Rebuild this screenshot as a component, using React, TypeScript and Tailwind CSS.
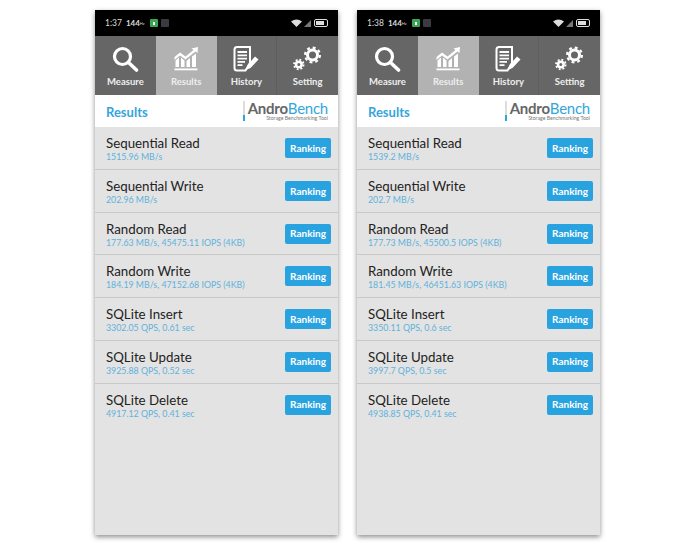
import React from "react";

interface Row {
  title: string;
  value: string;
}

interface Phone {
  time: string;
  rows: Row[];
}

const phones: Phone[] = [
  {
    time: "1:37",
    rows: [
      { title: "Sequential Read", value: "1515.96 MB/s" },
      { title: "Sequential Write", value: "202.96 MB/s" },
      { title: "Random Read", value: "177.63 MB/s, 45475.11 IOPS (4KB)" },
      { title: "Random Write", value: "184.19 MB/s, 47152.68 IOPS (4KB)" },
      { title: "SQLite Insert", value: "3302.05 QPS, 0.61 sec" },
      { title: "SQLite Update", value: "3925.88 QPS, 0.52 sec" },
      { title: "SQLite Delete", value: "4917.12 QPS, 0.41 sec" },
    ],
  },
  {
    time: "1:38",
    rows: [
      { title: "Sequential Read", value: "1539.2 MB/s" },
      { title: "Sequential Write", value: "202.7 MB/s" },
      { title: "Random Read", value: "177.73 MB/s, 45500.5 IOPS (4KB)" },
      { title: "Random Write", value: "181.45 MB/s, 46451.63 IOPS (4KB)" },
      { title: "SQLite Insert", value: "3350.11 QPS, 0.6 sec" },
      { title: "SQLite Update", value: "3997.7 QPS, 0.5 sec" },
      { title: "SQLite Delete", value: "4938.85 QPS, 0.41 sec" },
    ],
  },
];

const MeasureIcon = () => (
  <svg width="27" height="26" viewBox="0 0 27 26" fill="none" stroke="#fff">
    <circle cx="10.500" cy="10.500" r="8" strokeWidth="3.200" />
    <path d="M16.500 16.500 L24.500 24" strokeWidth="3.600" strokeLinecap="round" />
  </svg>
);

const ResultsIcon = () => (
  <svg width="25" height="24" viewBox="0 0 25 24" fill="#fff">
    <path d="M0.500 10 L6 5.500 L11.500 9.500 L19.500 3 L17.500 1.500 L24 0 L23.500 6 L21.500 4.500 L11.500 12.500 L6 8.500 L0.500 13 Z" />
    <path d="M1.500 13.500 L5 10.500 V20 H1.500 Z M7 10.500 L10.500 13.500 V20 H7 Z M12.500 14 L16 11 V20 H12.500 Z M18 9.500 L22 6.500 V20 H18 Z" />
    <rect x="0.500" y="21.500" width="23" height="1.800" />
  </svg>
);

const HistoryIcon = () => (
  <svg width="26" height="26" viewBox="0 0 26 26" fill="none">
    <path d="M1.500 3.500 Q1.500 1 4 1 H17 V17 L12.500 24.500 H4 Q1.500 24.500 1.500 22 Z" stroke="#fff" strokeWidth="2" />
    <path d="M4.500 6 H14 M4.500 9.300 H14 M4.500 12.600 H14 M4.500 15.900 H12 M4.500 19.200 H9.500" stroke="#fff" strokeWidth="1.800" />
    <path d="M14.500 19 L22 10.500 L25.500 13.500 L17.500 22 L13 24 Z" fill="#fff" />
  </svg>
);

const Gear = ({ cx, cy, r, w, tw }: { cx: number; cy: number; r: number; w: number; tw: number }) => {
  // teeth are a dashed ring round the solid ring
  const toothRadius = r + w / 2 + tw / 2 - 0.2;
  const tooth = (2 * Math.PI * toothRadius) / 16;
  return (
    <g fill="none" stroke="#fff">
      <circle cx={cx} cy={cy} r={r} strokeWidth={w} />
      <circle cx={cx} cy={cy} r={toothRadius} strokeWidth={tw} strokeDasharray={`${tooth} ${tooth}`} />
    </g>
  );
};

const SettingIcon = () => (
  <svg width="29" height="25" viewBox="0 0 29 25">
    <Gear cx={19.500} cy={9} r={5} w={3} tw={2.200} />
    <Gear cx={5.800} cy={18.500} r={2.800} w={2.600} tw={1.800} />
  </svg>
);

const tabs = [
  { label: "Measure", icon: <MeasureIcon />, active: false },
  { label: "Results", icon: <ResultsIcon />, active: true },
  { label: "History", icon: <HistoryIcon />, active: false },
  { label: "Setting", icon: <SettingIcon />, active: false },
];

const StatusBar = ({ time }: { time: string }) => (
  <div className="h-[26px] bg-black flex items-center justify-between pl-[10px] pr-[10px] text-[#ddd]">
    <div className="flex items-center">
      <span className="text-[8.500px] leading-none">{time}</span>
      <span className="text-[8px] leading-none ml-[4px] font-bold">144</span>
      <span className="text-[4px] leading-none mt-[2px]">Hz</span>
      <span className="w-[8px] h-[8px] rounded-[1px] bg-[#3aa655] ml-[5px] flex items-center justify-center">
        <span className="w-[2px] h-[3px] bg-white" />
      </span>
      <span className="w-[8px] h-[8px] rounded-[1px] bg-[#3a3a40] ml-[3px]" />
    </div>
    <div className="flex items-center gap-[2px]">
      <svg width="11" height="8" viewBox="0 0 11 8" fill="#ddd">
        <path d="M0 2.500 Q5.500 -1.500 11 2.500 L5.500 8 Z" />
      </svg>
      <svg width="8" height="7" viewBox="0 0 8 7" fill="#777">
        <path d="M0 7 L7 0 V7 Z" />
      </svg>
      <span className="w-[14px] h-[8px] border border-[#ddd] rounded-[2px] p-[1px] flex">
        <span className="w-[8px] bg-[#ddd]" />
      </span>
    </div>
  </div>
);

const Tabs = () => (
  <div className="h-[59px] grid grid-cols-4 bg-[#666666]">
    {tabs.map((tab) => (
      <div
        key={tab.label}
        className={`flex flex-col items-center ${tab.active ? "bg-[#b2b2b2]" : ""} ${tab.label === "History" ? "border-r border-[#5e5e5e]" : ""}`}
      >
        <div className="h-[27px] mt-[9px] flex items-center justify-center">{tab.icon}</div>
        <span className="mt-[3px] text-[9.500px] leading-[14px] font-bold text-[#eeeeee]">{tab.label}</span>
      </div>
    ))}
  </div>
);

const Logo = () => (
  <div className="flex items-stretch h-[20px] mt-[-1px]">
    <div className="w-[2px] mr-[3px] bg-[#dcdcdc] flex flex-col justify-end">
      <div className="h-[6px] bg-[#2fa3dc]" />
    </div>
    <div className="flex flex-col items-end">
      <div className="text-[15px] leading-[15px] tracking-[-0.25px]">
        <span className="font-bold text-[#666]">Andro</span>
        <span className="text-[#35a5dd]">Bench</span>
      </div>
      <div className="text-[5.200px] leading-[5px] text-[#777]">Storage Benchmarking Tool</div>
    </div>
  </div>
);

const ResultRow = ({ row }: { row: Row }) => (
  <div className="h-[42.700px] border-b border-[#c9c9c9] last:border-b-0 flex justify-between pl-[11px] pr-[7px] pt-[8px]">
    <div>
      <div className="text-[13.300px] leading-[16px] text-[#222]">{row.title}</div>
      <div className="text-[8.800px] leading-[11px] text-[#5fb2db]">{row.value}</div>
    </div>
    <div className="mt-[3px] w-[46px] h-[20px] bg-[#29a3e0] rounded-[2px] flex items-center justify-center text-[10px] font-bold text-white">
      Ranking
    </div>
  </div>
);

const PhoneScreen = ({ phone }: { phone: Phone }) => (
  <div className="w-[243px] h-[525px] bg-[#e3e3e3] shadow-[0_2px_5px_rgba(0,0,0,0.45)] flex flex-col">
    <StatusBar time={phone.time} />
    <Tabs />
    <div className="h-[32px] bg-white flex items-center justify-between pl-[11px] pr-[10px]">
      <span className="text-[13px] font-bold text-[#35a5dd] mt-[3px]">Results</span>
      <Logo />
    </div>
    <div className="pt-[0.400px]">
      {phone.rows.map((row) => (
        <ResultRow key={row.title} row={row} />
      ))}
    </div>
  </div>
);

export default function App() {
  return (
    <div className="w-[700px] h-[555px] bg-white flex gap-[19px] pl-[95px] pt-[10px] font-['Lato',sans-serif]">
      {phones.map((phone) => (
        <PhoneScreen key={phone.time} phone={phone} />
      ))}
    </div>
  );
}
